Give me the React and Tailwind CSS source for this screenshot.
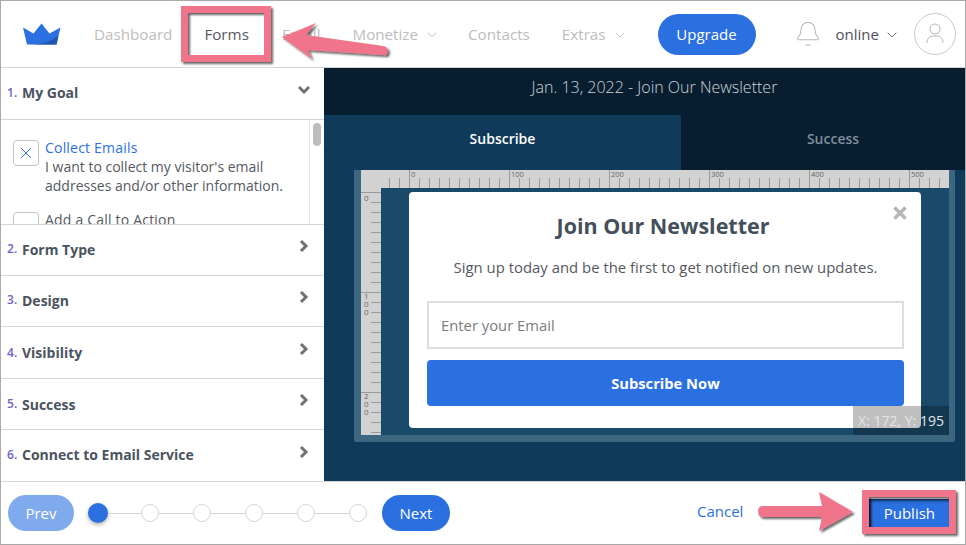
import React from 'react'
import { Bell, ChevronDown } from 'lucide-react'

const topTicks = Array.from({ length: 56 }, (_, i) => i + 3)
const sideTicks = Array.from({ length: 25 }, (_, i) => i)

function Crown() {
  return (
    <svg width="38" height="22" viewBox="0 0 38 22" className="shrink-0">
      <path d="M0 4.5 L10.5 10.5 L18.5 0.5 L26.5 10.5 L37.5 4.5 L33.5 21.5 L4 21.5 Z" fill="#2b70e0" />
      <path d="M8 21.5 C20 21 29 18 35.5 12.5 L33.5 21.5 Z" fill="#2257b0" />
    </svg>
  )
}

function NavItem({ children, caret, active, className = '' }) {
  return (
    <span className={`flex items-center gap-[6px] text-[15.2px] ${active ? 'text-[#55595f]' : 'text-[#bdbdbd]'} ${className}`}>
      {children}
      {caret && <ChevronDown size={16} strokeWidth={1} className="text-[#a9a9a9] mt-[2px]" />}
    </span>
  )
}

function Row({ n, title, open, drop, className = 'h-[51px]' }) {
  return (
    <div className={`${className} shrink-0 flex items-center pl-[6px] pr-[13px] pb-[2px] border-b border-[#d5d5d5]`}>
      <span className={`w-[15px] text-[12px] font-semibold text-[#6f63c6] ${drop ? 'mt-[2px]' : ''}`}>{n}.</span>
      <span className={`text-[14px] font-bold text-[#4a5360] ${drop ? 'mt-[2px]' : ''}`}>{title}</span>
      <svg width="14" height="14" viewBox="0 0 14 14" className="ml-auto -mt-[6px]">
        <polyline
          points={open ? '2,4 7,9 12,4' : '4,2 9,7 4,12'}
          fill="none"
          stroke="#6d7278"
          strokeWidth="3"
        />
      </svg>
    </div>
  )
}

function TopRuler() {
  return (
    <svg width="588" height="18" className="block shrink-0 bg-[#d2d2d2]">
      {topTicks.map((i) => {
        const x = 48.5 + (i - 5) * 10
        const major = (i - 5) % 10 === 0
        return <line key={i} x1={x} x2={x} y1={major ? 0 : 8} y2="18" stroke="#999" />
      })}
      {[0, 100, 200, 300, 400, 500].map((v) => (
        <text key={v} x={50 + v} y="7" fontSize="7.5" fill="#666" fontFamily="'Open Sans'">{v}</text>
      ))}
    </svg>
  )
}

function SideRuler() {
  return (
    <svg width="20" height="247" className="block shrink-0 bg-[#d2d2d2]">
      {sideTicks.map((i) => {
        const y = 4.5 + i * 10
        const major = i % 10 === 0
        return <line key={i} x1={major ? 0 : 10} x2="20" y1={y} y2={y} stroke="#999" />
      })}
      {['0', '1', '0', '0', '2', '0', '0'].map((d, i) => {
        const ys = [13, 111, 119, 127, 211, 219, 227]
        return <text key={i} x="3" y={ys[i]} fontSize="8" fill="#666" fontFamily="'Open Sans'">{d}</text>
      })}
    </svg>
  )
}

function Sidebar() {
  return (
    <div className="w-[323px] shrink-0 flex flex-col bg-white">
      <Row n={1} title="My Goal" open className="h-[52px]" />
      <div className="h-[105px] shrink-0 flex border-b border-[#d5d5d5] overflow-hidden">
        <div className="flex-1 pl-[12px] pt-[20px]">
          <div className="flex gap-[6px]">
            <div className="w-[26px] h-[26px] shrink-0 rounded-[4px] border border-[#c4c4c4] flex items-center justify-center">
              <svg width="12" height="12" viewBox="0 0 12 12">
                <path d="M1 1 L11 11 M11 1 L1 11" stroke="#2b70e0" strokeWidth="1" />
              </svg>
            </div>
            <div className="text-[14px] leading-[19px] text-[#55595f] -mt-[2px]">
              <div className="text-[#2b70e0] tracking-[0.2px]">Collect Emails</div>
              <div className="whitespace-nowrap">I want to collect my visitor's email</div>
              <div className="whitespace-nowrap">addresses and/or other information.</div>
            </div>
          </div>
          <div className="flex gap-[6px] mt-[17px]">
            <div className="w-[26px] h-[26px] shrink-0 rounded-[4px] border border-[#c4c4c4]" />
            <div className="text-[14px] leading-[19px] tracking-[0.2px] text-[#55595f] -mt-[2px]">Add a Call to Action</div>
          </div>
        </div>
        <div className="w-[15px] shrink-0 border-l border-[#e8e8e8] pl-[3px] pt-[3px]">
          <div className="w-[8px] h-[23px] rounded-[4px] bg-[#bdbdbd]" />
        </div>
      </div>
      <Row n={2} title="Form Type" />
      <Row n={3} title="Design" />
      <Row n={4} title="Visibility" drop className="h-[52px]" />
      <Row n={5} title="Success" drop />
      <Row n={6} title="Connect to Email Service" className="h-[51px] border-b-0" />
    </div>
  )
}

function Popup() {
  return (
    <div className="relative w-[512px] h-[236px] bg-white rounded-[4px] pl-[18px] pr-[17px] flex flex-col items-center">
      <svg width="14" height="14" viewBox="0 0 14 14" className="absolute right-[14px] top-[14px]">
        <path d="M1.5 1.5 L12.5 12.5 M12.5 1.5 L1.5 12.5" stroke="#b2b5b7" strokeWidth="3.4" />
      </svg>
      <h2 className="mt-[17px] mr-[5px] text-[21.5px] leading-[34px] font-bold text-[#444f5b]">Join Our Newsletter</h2>
      <p className="mt-[12px] text-[14.9px] leading-[24px] text-[#55595f] whitespace-nowrap">
        Sign up today and be the first to get notified on new updates.
      </p>
      <div className="mt-[22px] w-full h-[48px] border-2 border-[#dedede] pl-[12px] flex items-center text-[14.8px] text-[#7c7c7c]">
        Enter your Email
      </div>
      <button className="mt-[11px] w-full h-[46px] rounded-[4px] bg-[#2b70e0] text-[14.7px] font-bold text-white">
        Subscribe Now
      </button>
    </div>
  )
}

function Main() {
  return (
    <div className="flex-1 flex flex-col bg-[#0f3a5a] min-w-0">
      <div className="h-[47px] shrink-0 bg-[#061e30] flex items-center justify-center pl-[20px] pb-[9px] text-[16px] font-light text-[#ced4d9]">
        Jan. 13, 2022 - Join Our Newsletter
      </div>
      <div className="h-[55px] shrink-0 flex text-[14px] font-semibold">
        <div className="w-[357px] rounded-t-[3px] pt-[13px] text-center text-white">Subscribe</div>
        <div className="flex-1 bg-[#061e30] pt-[13px] text-center text-[#7f8f9b] pl-[20px]">Success</div>
      </div>
      <div className="flex-1 pl-[30px] pr-[10px] pb-[39px]">
        <div className="relative h-full border-x-[7px] border-b-[7px] border-r-[6px] border-[#3d6680] rounded-b-[3px] bg-[#1a4a6a]">
          <TopRuler />
          <div className="flex">
            <SideRuler />
            <div className="pl-[28px] pt-[4px]">
              <Popup />
            </div>
          </div>
          <div className="absolute right-0 bottom-0 w-[96px] h-[29px] bg-black/25 text-[14px] text-[#e2e6e9] flex items-center justify-center">
            X: 172, Y: 195
          </div>
        </div>
      </div>
    </div>
  )
}

function Stepper() {
  return (
    <div className="flex items-center ml-[14px]">
      <div className="w-[20px] h-[20px] rounded-full bg-[#2b70e0] shadow-[0_2px_4px_rgba(0,0,0,0.3)]" />
      {[0, 1, 2, 3, 4].map((i) => (
        <React.Fragment key={i}>
          <div className={`h-px bg-[#d5d5d5] ${i === 0 ? 'w-[33px]' : 'w-[34px]'}`} />
          <div className="w-[18px] h-[18px] rounded-full border border-[#d5d5d5] bg-white" />
        </React.Fragment>
      ))}
    </div>
  )
}

function Annotations() {
  return (
    <svg width="966" height="545" className="absolute -left-px -top-px pointer-events-none">
      <defs>
        <filter id="sh" x="-20%" y="-20%" width="150%" height="150%">
          <feDropShadow dx="2" dy="2" stdDeviation="1" floodColor="#000" floodOpacity="0.6" />
        </filter>
      </defs>
      <g fill="#f0758a" filter="url(#sh)">
        <path d="M282 37 L316 23 L306 35 L383 46 Q388 47 388 51 Q388 56 383 55 L308 50 L312 59 Z" />
        <path d="M853 512 L819 492 L822 506 L763 506 Q758 506 758 511.5 Q758 517 763 517 L822 517 L819 531 Z" />
        <path fillRule="evenodd" d="M181 6 H271 V62 H181 Z M188 13 V55 H264 V13 Z" />
        <path fillRule="evenodd" d="M862 490 H956 V534 H862 Z M869 497 V527 H949 V497 Z" />
      </g>
    </svg>
  )
}

export default function App() {
  return (
    <div className="relative w-[966px] h-[545px] flex flex-col bg-white border border-[#a9a9a9] overflow-hidden font-['Open_Sans',sans-serif]">
      {/* Header */}
      <header className="h-[67px] shrink-0 flex items-center pl-[22px] border-b border-[#d5d5d5]">
        <Crown />
        <NavItem className="ml-[33px]">Dashboard</NavItem>
        <NavItem className="ml-[32px]" active>Forms</NavItem>
        <NavItem className="ml-[33px]">Email</NavItem>
        <NavItem className="ml-[32px]" caret>Monetize</NavItem>
        <NavItem className="ml-[28px]">Contacts</NavItem>
        <NavItem className="ml-[32px]" caret>Extras</NavItem>
        <button className="ml-[30px] w-[98px] h-[41px] rounded-full bg-[#2b70e0] text-[15px] text-white">Upgrade</button>
        <Bell size={28} strokeWidth={0.9} className="ml-[38px] -mt-[1px] text-[#b5b5b5]" />
        <span className="ml-[14px] text-[15px] text-[#4d5157]">online</span>
        <ChevronDown size={16} strokeWidth={1.2} className="ml-[5px] mt-[2px] text-[#444]" />
        <div className="ml-[14px] w-[42px] h-[42px] rounded-full border border-[#c9c9c9] flex items-center justify-center">
          <svg width="26" height="26" viewBox="0 0 26 26" fill="none" stroke="#b5b5b5" strokeWidth="1">
            <circle cx="13" cy="8" r="5" />
            <path d="M5 22 C5 16 9 15 13 15 C17 15 21 16 21 22" />
          </svg>
        </div>
      </header>

      {/* Body */}
      <div className="flex-1 flex min-h-0">
        <Sidebar />
        <Main />
      </div>

      {/* Footer */}
      <footer className="h-[63px] shrink-0 flex items-center pl-[7px] border-t border-[#d5d5d5]">
        <button className="w-[66px] h-[36px] rounded-full bg-[#7faaee] text-[15px] text-white">Prev</button>
        <Stepper />
        <button className="ml-[15px] w-[68px] h-[36px] rounded-full bg-[#2b70e0] text-[15px] text-white">Next</button>
        <span className="ml-[247px] mb-[3px] text-[15px] text-[#2b70e0]">Cancel</span>
        <button className="ml-[126px] w-[80px] h-[30px] mt-[1px] bg-[#2b70e0] shadow-[inset_2px_2px_3px_rgba(0,0,0,0.55)] text-[15px] text-white">Publish</button>
      </footer>

      <Annotations />
    </div>
  )
}
